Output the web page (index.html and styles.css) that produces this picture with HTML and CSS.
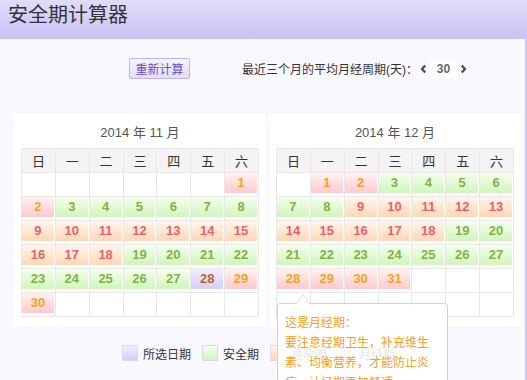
FILE: index.html
```html
<!DOCTYPE html>
<html lang="zh-CN">
<head>
  <meta charset="UTF-8" />
  <title>安全期计算器</title>
  <meta name="viewport" content="width=device-width, initial-scale=1" />
  <link rel="stylesheet" href="styles.css">
</head>
<body>
  <header class="topbar">
    <h1>安全期计算器</h1>
  </header>

  <div class="panel">
    <div class="toolbar">
      <button class="recalc-btn">重新计算</button>
      <span class="cycle-label">最近三个月的平均月经周期(天)：</span>
      <span class="stepper">
        <svg class="arrow" width="7" height="10" viewBox="0 0 7 10"><path d="M5.2 1.5 L2 5 L5.2 8.5" fill="none" stroke="#4a4a4a" stroke-width="2.2"/></svg>
        <span class="cycle-value">30</span>
        <svg class="arrow" width="7" height="10" viewBox="0 0 7 10"><path d="M1.8 1.5 L5 5 L1.8 8.5" fill="none" stroke="#4a4a4a" stroke-width="2.2"/></svg>
      </span>
    </div>

    <div class="calendars" id="calendars"></div>

    <div class="legend">
      <span class="swatch sel"></span><span class="legend-text">所选日期</span>
      <span class="swatch safe"></span><span class="legend-text">安全期</span>
      <span class="swatch danger"></span><span class="legend-text">易孕期</span>
      <span class="swatch period"></span><span class="legend-text">月经期</span>
    </div>

    <div class="tip">
      <p>这是月经期：</p>
      <p>要注意经期卫生，补充维生素、均衡营养，才能防止炎症，让经期更加舒适。</p>
    </div>
  </div>

  <script>
    // m = 月经期, s = 安全期, d = 易孕期, x = 所选日期
    const months = [
      { title: "2014 年 11 月", start: 6, codes: "mm" + "ssssss" + "dddddddddd" + "sssssssss" + "x" + "mm" },
      { title: "2014 年 12 月", start: 1, codes: "mm" + "ssssss" + "dddddddddd" + "sssssssss" + "mmmm" }
    ];
    const kinds = { m: "period", s: "safe", d: "danger", x: "sel" };
    const weekdays = ["日", "一", "二", "三", "四", "五", "六"];

    const wrap = document.getElementById("calendars");
    months.forEach(m => {
      let rows = "";
      for (let w = 0; w < 6; w++) {
        rows += "<tr>";
        for (let i = 0; i < 7; i++) {
          const day = w * 7 + i - m.start + 1;
          if (day >= 1 && day <= m.codes.length) {
            rows += `<td><span class="day ${kinds[m.codes[day - 1]]}">${day}</span></td>`;
          } else {
            rows += "<td></td>";
          }
        }
        rows += "</tr>";
      }
      wrap.innerHTML += `
        <div class="month">
          <div class="month-title">${m.title}</div>
          <table class="cal">
            <thead><tr>${weekdays.map(d => `<th>${d}</th>`).join("")}</tr></thead>
            <tbody>${rows}</tbody>
          </table>
        </div>`;
    });
  </script>
</body>
</html>
```

FILE: styles.css
```css
* { box-sizing: border-box; }
body {
  margin: 0; background: #cdc6f6; color: #333;
  font-family: "Liberation Sans", "Noto Sans CJK SC", sans-serif;
  font-size: 12px; height: 380px; overflow: hidden;
}
.topbar {
  height: 39px; padding-left: 8px;
  background: linear-gradient(to bottom, #e0dcfa, #cac2f5);
}
.topbar h1 {
  margin: 0; font-size: 20px; font-weight: normal; line-height: 31px;
  color: #333;
}
.panel {
  position: relative; width: 525px; height: 341px;
  background: #f8f8fe; padding-top: 19px;
}
.toolbar { display: flex; align-items: center; padding-left: 129px; height: 21px; }
.recalc-btn {
  width: 61px; height: 21px; padding: 0;
  font-family: inherit; font-size: 12px; color: #6a4cc0;
  background: linear-gradient(to bottom, #f6f4ff, #e2defa);
  border: 1px solid #bcb4ea; border-radius: 2px;
}
.cycle-label { margin-left: 52px; color: #333; }
.stepper { display: flex; align-items: center; margin-left: 2px; }
.cycle-value {
  width: 27px; height: 18px; line-height: 18px; margin: 0 3px;
  text-align: center; background: #fff; color: #666; font-weight: bold;
}
.calendars { display: flex; gap: 3px; margin: 35px 0 0 14px; }
.month { width: 252px; background: #fff; padding: 8px 7px 10px 7px; }
.month-title { text-align: center; font-size: 13px; color: #555; line-height: 22px; margin-bottom: 4px; }
.cal {
  width: 238px; table-layout: fixed; border-collapse: collapse;
}
.cal th, .cal td { border: 1px solid #e8e8e8; text-align: center; padding: 0; }
.cal th { height: 24px; background: #f4f4f4; font-weight: normal; font-size: 13px; color: #333; }
.cal td { height: 24px; padding: 0 1px 3px 0; vertical-align: top; }
.day {
  display: block; height: 20px; line-height: 20px;
  font-size: 13px; font-weight: bold;
}
.period { color: #f7a21b; background: linear-gradient(to bottom, #fff2f2, #ffc9cd); }
.safe { color: #7db545; background: linear-gradient(to bottom, #f5ffee, #d2f4bc); }
.danger { color: #ec5f6b; background: linear-gradient(to bottom, #fff6ee, #ffd7b6); }
.sel { color: #c0642a; background: linear-gradient(to bottom, #efedff, #d4d0f8); }
.legend { display: flex; align-items: center; margin: 18px 0 0 122px; height: 16px; }
.swatch { width: 16px; height: 16px; border: 1px solid #dcdce6; margin-right: 5px; }
.legend-text { margin-right: 11px; }
.tip {
  position: absolute; left: 277px; top: 264px; width: 171px;
  padding: 9px 9px 0 7px;
  background: rgba(255, 255, 255, 0.88);
  border: 1px solid #f4c2c4; border-radius: 3px;
  color: #f5a01a; line-height: 20px;
}
.tip p { margin: 0; }
.tip::before, .tip::after {
  content: ""; position: absolute; left: 18px; top: -10px;
  border: 7px solid transparent; border-top: 0; border-bottom: 10px solid #f4c2c4;
}
.tip::after { top: -9px; border-bottom-color: #fff; }
```
